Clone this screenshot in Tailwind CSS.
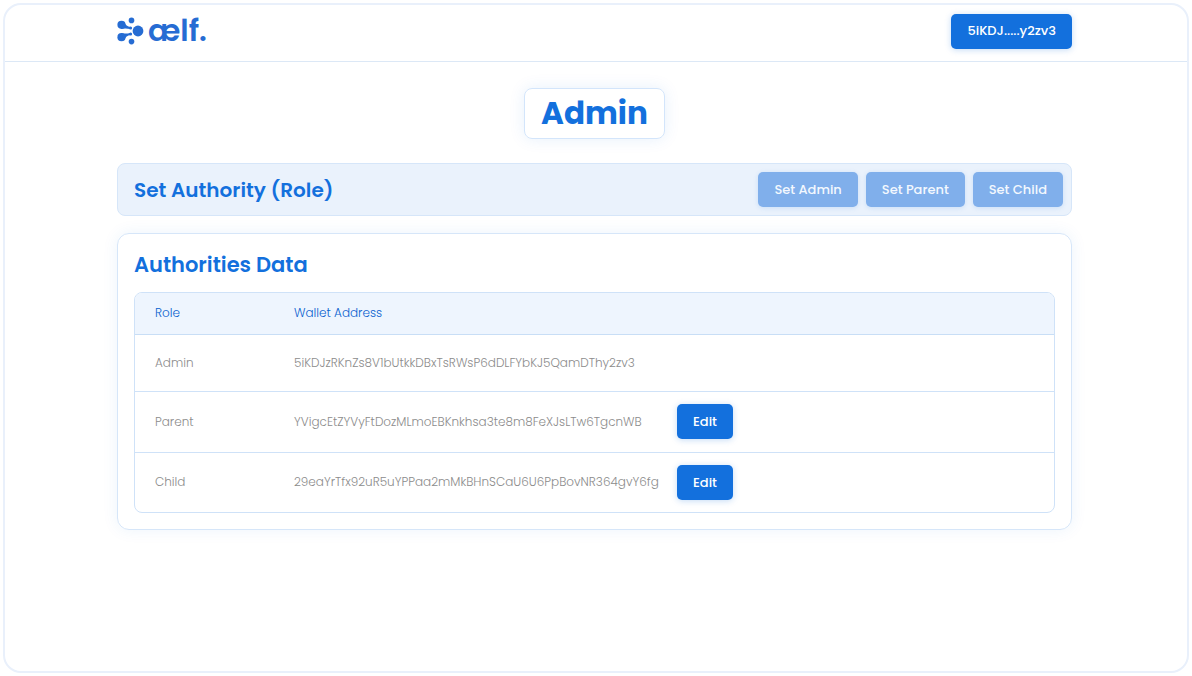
<!DOCTYPE html>
<html lang="en">
<head>
<meta charset="utf-8">
<meta name="viewport" content="width=device-width, initial-scale=1">
<title>Admin</title>
<script src="https://cdn.jsdelivr.net/npm/@tailwindcss/browser@4"></script>
</head>
<body class="flex min-h-screen bg-white p-[3px] font-[Poppins,Inter,sans-serif] text-[#1370dd]">
<div class="flex-1 rounded-[18px] border-2 border-[#e9f0fb]">
  <header class="border-b border-[#dce8f6] pr-[19px] pl-4">
    <div class="mx-auto flex h-14 max-w-[955px] items-center justify-between pb-1">
      <a href="#" aria-label="aelf" class="flex items-center gap-1 text-[#266cd3]">
        <svg class="h-7 w-[27px]" viewBox="0 0 27 28" fill="currentColor" aria-hidden="true">
          <circle cx="21" cy="14" r="5.400"/>
          <circle cx="4.500" cy="7.800" r="4.100"/>
          <circle cx="4.500" cy="20.200" r="4.100"/>
          <circle cx="14.500" cy="3.400" r="2.800"/>
          <circle cx="14.500" cy="24.600" r="2.800"/>
          <circle cx="13.600" cy="11" r="1.500"/>
          <circle cx="13.600" cy="17" r="1.500"/>
          <path d="M7 4.800Q9 9.800 13.600 10L13.200 12Q8 11 4 12ZM7 23.200Q9 18.200 13.600 18L13.200 16Q8 17 4 16Z"/>
        </svg>
        <span class="text-[30px] leading-7 font-semibold">ælf.</span>
      </a>
      <button type="button" class="h-[35px] rounded-[5px] bg-[#1370dd] px-4 text-[13px] font-medium text-white shadow-[0_1px_6px_rgba(19,112,221,0.25)]">5iKDJ.....y2zv3</button>
    </div>
  </header>
  <main class="pr-[19px] pl-4">
    <div class="mx-auto flex max-w-[955px] flex-col pt-[26px]">
      <h1 class="self-center rounded-lg border border-[#d3e5fb] px-4 text-[31px] leading-[49px] font-bold shadow-[0_0_16px_rgba(19,112,221,0.10)]">Admin</h1>
      <section class="mt-6 flex items-center justify-between rounded-lg border border-[#d6e6f9] bg-[#eaf2fc] py-2 pr-2 pl-4">
        <h2 class="text-xl font-semibold">Set Authority (Role)</h2>
        <div class="flex gap-2">
          <button type="button" disabled class="h-[35px] rounded-[5px] bg-[#80afeb] px-4 text-[13px] font-medium text-[#f3f8fe] shadow-[0_1px_5px_rgba(19,112,221,0.15)]">Set Admin</button>
          <button type="button" disabled class="h-[35px] rounded-[5px] bg-[#80afeb] px-4 text-[13px] font-medium text-[#f3f8fe] shadow-[0_1px_5px_rgba(19,112,221,0.15)]">Set Parent</button>
          <button type="button" disabled class="h-[35px] rounded-[5px] bg-[#80afeb] px-4 text-[13px] font-medium text-[#f3f8fe] shadow-[0_1px_5px_rgba(19,112,221,0.15)]">Set Child</button>
        </div>
      </section>
      <section class="mt-[17px] rounded-xl border border-[#d6e6f9] p-4 shadow-[0_0_16px_rgba(19,112,221,0.08)]">
        <h2 class="text-[21px] leading-[30px] font-semibold">Authorities Data</h2>
        <div class="mt-3 overflow-hidden rounded-lg border border-[#cfe2f8]">
          <table class="w-full table-fixed text-left text-xs font-light text-[#8c8c8c]">
            <colgroup><col class="w-[139px]"><col class="w-[383px]"><col></colgroup>
            <thead class="bg-[#eef5fe] text-[#0a62cf]">
              <tr class="h-[41px] border-b border-[#c8def6]">
                <th scope="col" class="pl-5 font-light">Role</th>
                <th scope="col" class="pl-5 font-light">Wallet Address</th>
                <td></td>
              </tr>
            </thead>
            <tbody class="divide-y divide-[#cfe2f8]">
              <tr class="h-[57px]"><td class="pl-5">Admin</td><td class="pl-5">5iKDJzRKnZs8V1bUtkkDBxTsRWsP6dDLFYbKJ5QamDThy2zv3</td><td></td></tr>
              <tr class="h-[61px]"><td class="pl-5">Parent</td><td class="pl-5">YVigcEtZYVyFtDozMLmoEBKnkhsa3te8m8FeXJsLTw6TgcnWB</td><td class="pl-5"><button type="button" class="h-[35px] rounded-[5px] bg-[#1370dd] px-4 text-[13px] font-medium text-white shadow-[0_1px_6px_rgba(19,112,221,0.25)]">Edit</button></td></tr>
              <tr class="h-[60px]"><td class="pl-5">Child</td><td class="pl-5">29eaYrTfx92uR5uYPPaa2mMkBHnSCaU6U6PpBovNR364gvY6fg</td><td class="pl-5"><button type="button" class="h-[35px] rounded-[5px] bg-[#1370dd] px-4 text-[13px] font-medium text-white shadow-[0_1px_6px_rgba(19,112,221,0.25)]">Edit</button></td></tr>
            </tbody>
          </table>
        </div>
      </section>
    </div>
  </main>
</div>
</body>
</html>
